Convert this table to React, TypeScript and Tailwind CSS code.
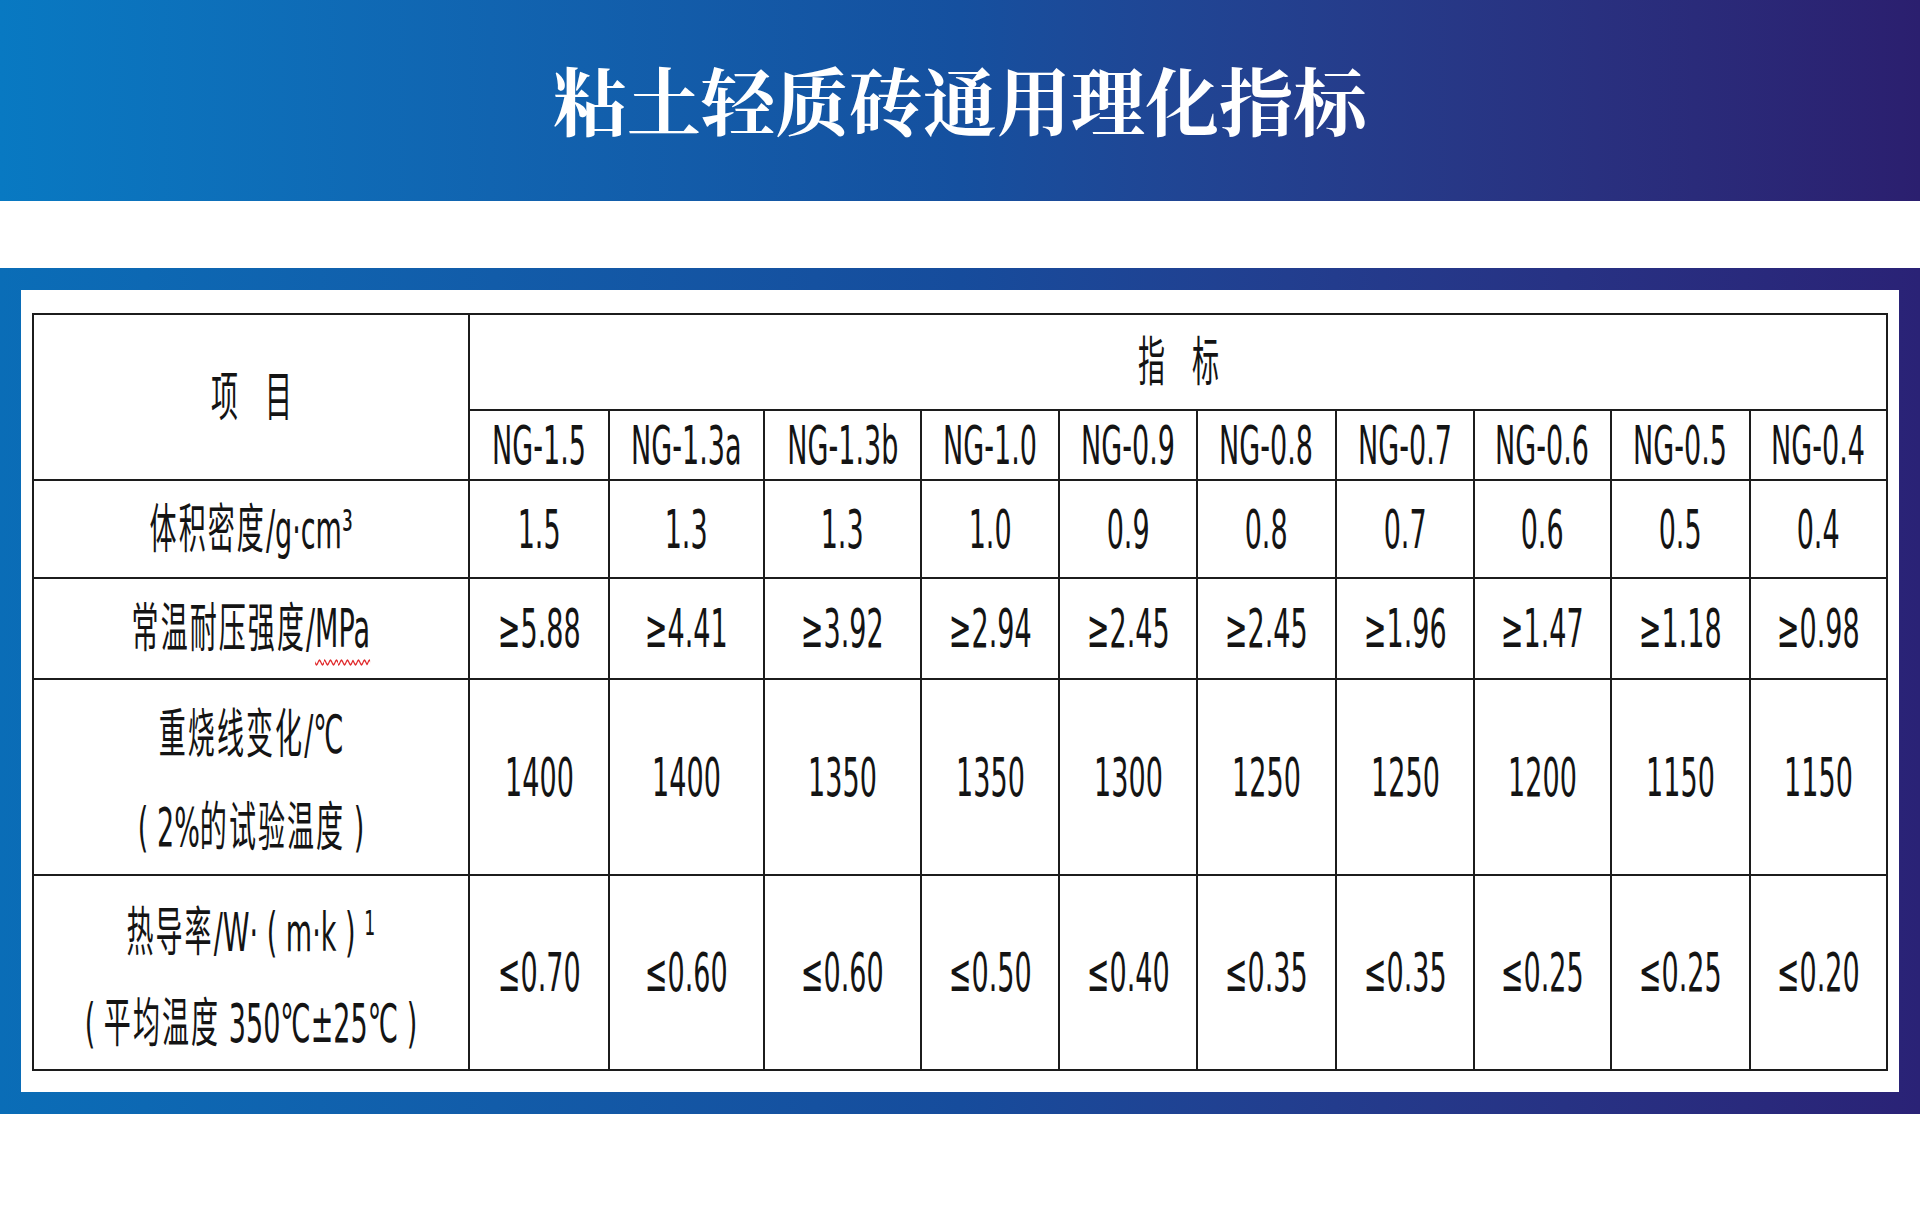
import type { ReactNode } from "react";

const models = ["NG-1.5", "NG-1.3a", "NG-1.3b", "NG-1.0", "NG-0.9", "NG-0.8", "NG-0.7", "NG-0.6", "NG-0.5", "NG-0.4"];
const colWidths = [436, 140, 155, 157, 138, 138, 139, 138, 137, 139, 137];

type Row = { height: string; label: ReactNode; values: string[] };

const Txt = ({ children }: { children: ReactNode }) => (
  <div className="flex justify-center">
    <span className="whitespace-pre scale-x-[0.51]">{children}</span>
  </div>
);

// CJK runs are a touch wider than the latin ones in the slide
const Cn = ({ children }: { children: ReactNode }) => <span className="tracking-[4px]">{children}</span>;

const rows: Row[] = [
  {
    height: "h-[98px]",
    label: (
      <Txt>
        <Cn>体积密度</Cn>/g·cm³
      </Txt>
    ),
    values: ["1.5", "1.3", "1.3", "1.0", "0.9", "0.8", "0.7", "0.6", "0.5", "0.4"],
  },
  {
    height: "h-[101px]",
    label: (
      <Txt>
        <Cn>常温耐压强度</Cn>/
        <span className="underline decoration-wavy decoration-[#e0282a] decoration-2 underline-offset-[12px]">MPa</span>
      </Txt>
    ),
    values: ["≥5.88", "≥4.41", "≥3.92", "≥2.94", "≥2.45", "≥2.45", "≥1.96", "≥1.47", "≥1.18", "≥0.98"],
  },
  {
    height: "h-[195px]",
    label: (
      <div className="pt-[8px] leading-[93px]">
        <Txt>
          <Cn>重烧线变化</Cn>/℃
        </Txt>
        <Txt>
          ( 2%<Cn>的试验温度</Cn> )
        </Txt>
      </div>
    ),
    values: ["1400", "1400", "1350", "1350", "1300", "1250", "1250", "1200", "1150", "1150"],
  },
  {
    height: "h-[195px]",
    label: (
      <div className="pt-[10px] leading-[91px]">
        <Txt>
          <Cn>热导率</Cn>/W· ( m·k ) <span className="relative -top-[16px] text-[34px] leading-none">1</span>
        </Txt>
        <Txt>
          ( <Cn>平均温度</Cn> 350℃±25℃ )
        </Txt>
      </div>
    ),
    values: ["≤0.70", "≤0.60", "≤0.60", "≤0.50", "≤0.40", "≤0.35", "≤0.35", "≤0.25", "≤0.25", "≤0.20"],
  },
];

const cell = "border-2 border-[#1c1c1c] p-0 align-middle";

export default function App() {
  return (
    <div className="w-[1920px] h-[1209px] bg-white font-['DejaVu_Sans','Noto_Sans_CJK_SC',sans-serif] text-[#141414]">
      {/* title band */}
      <header className="h-[201px] flex items-center justify-center bg-gradient-to-r from-[#0879c2] via-[#15509f] to-[#2b1f6f]">
        <h1 className="pb-1 text-[74px] font-bold text-white font-['Noto_Serif_CJK_SC','Noto_Sans_CJK_SC',serif]">
          粘土轻质砖通用理化指标
        </h1>
      </header>

      <div className="h-[67px]" />

      {/* table band */}
      <section className="px-[21px] py-[22px] bg-gradient-to-r from-[#0a6db7] via-[#164c9c] to-[#2a2276]">
        <div className="bg-white pl-[11px] pr-[13px] pt-[23px] pb-[21px]">
          <table className="table-fixed border-collapse w-[1854px] text-[53px] leading-none">
            <colgroup>
              {colWidths.map((w, i) => (
                <col key={i} style={{ width: w }} />
              ))}
            </colgroup>
            <tbody>
              <tr className="h-[96px]">
                <td rowSpan={2} className={cell}>
                  <Txt>项　目</Txt>
                </td>
                <td colSpan={10} className={cell}>
                  <Txt>指　标</Txt>
                </td>
              </tr>
              <tr className="h-[70px]">
                {models.map((m) => (
                  <td key={m} className={cell}>
                    <Txt>{m}</Txt>
                  </td>
                ))}
              </tr>
              {rows.map((r, i) => (
                <tr key={i} className={r.height}>
                  <td className={cell}>{r.label}</td>
                  {r.values.map((v, j) => (
                    <td key={j} className={cell}>
                      <Txt>{v}</Txt>
                    </td>
                  ))}
                </tr>
              ))}
            </tbody>
          </table>
        </div>
      </section>
    </div>
  );
}
